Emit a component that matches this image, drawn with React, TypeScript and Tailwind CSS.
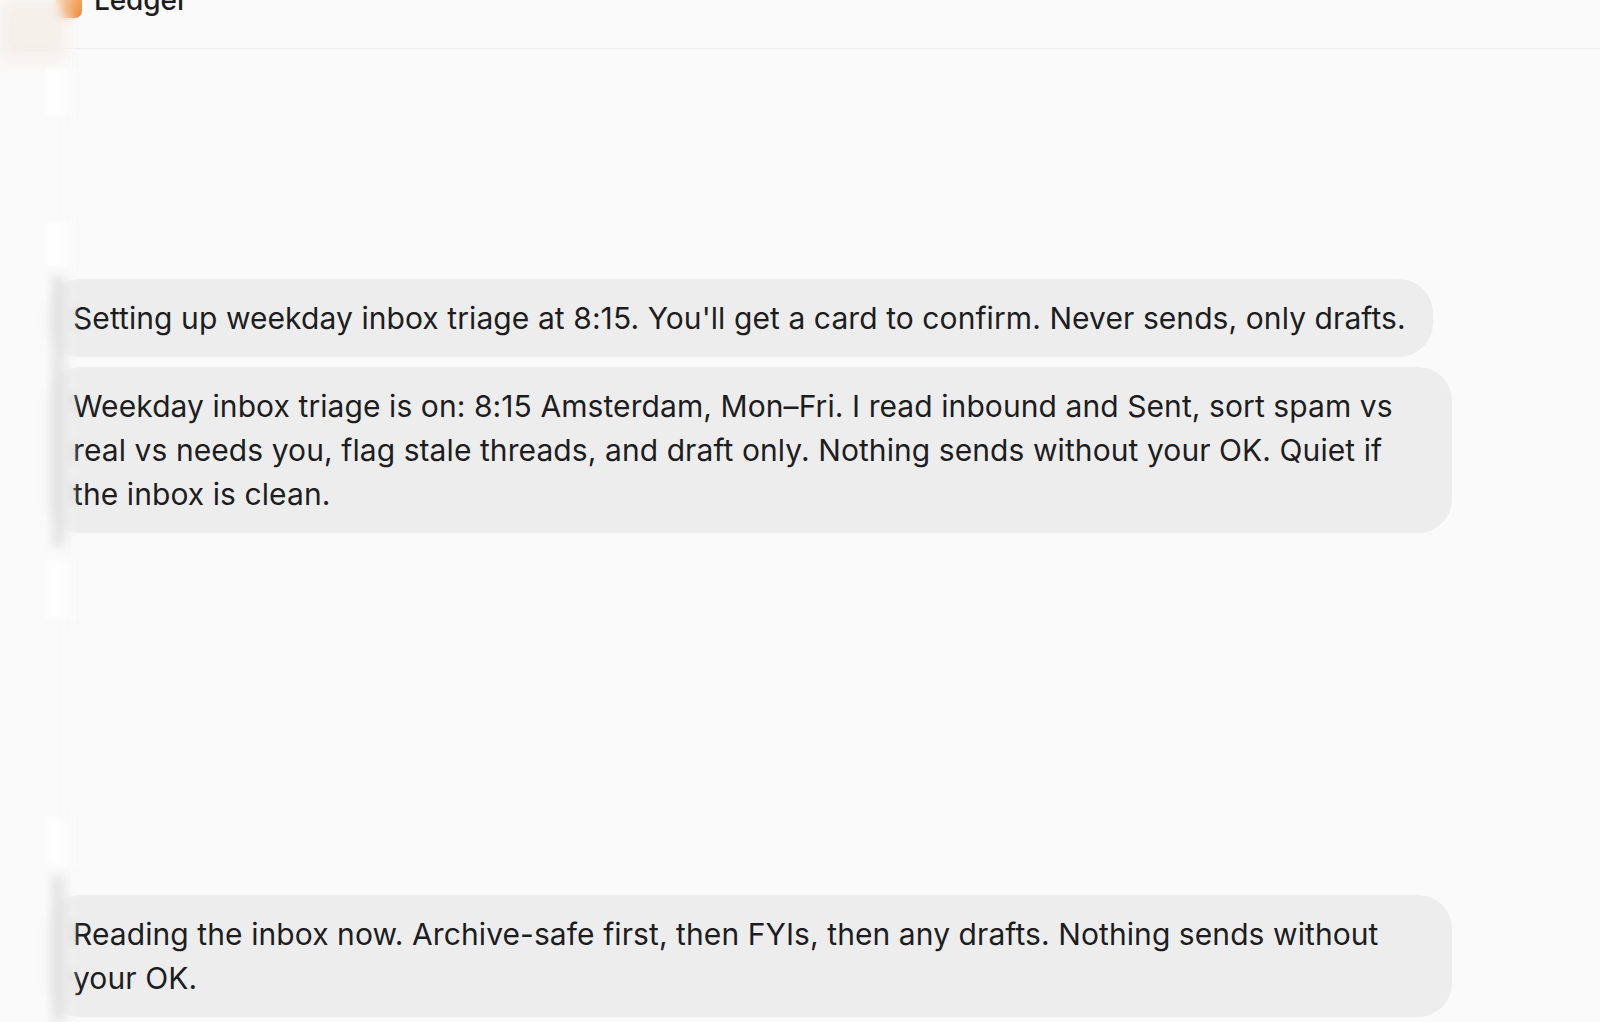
const messages = [
  {
    id: 1,
    text: "Setting up weekday inbox triage at 8:15. You'll get a card to confirm. Never sends, only drafts.",
    gapBefore: 'mt-[230px]',
  },
  {
    id: 2,
    text: 'Weekday inbox triage is on: 8:15 Amsterdam, Mon–Fri. I read inbound and Sent, sort spam vs real vs needs you, flag stale threads, and draft only. Nothing sends without your OK. Quiet if the inbox is clean.',
    gapBefore: 'mt-[10px]',
  },
  {
    id: 3,
    text: 'Reading the inbox now. Archive-safe first, then FYIs, then any drafts. Nothing sends without your OK.',
    gapBefore: 'mt-[362px]',
  },
]

function Bubble({ text, className }: { text: string; className?: string }) {
  return (
    <div
      className={`w-fit max-w-[1406px] rounded-[34px] bg-[#ededed] px-[27px] py-[17px] text-[30px] leading-[44px] tracking-[0.08px] text-[#1d1d1f] ${className ?? ''}`}
    >
      {text}
    </div>
  )
}

export default function App() {
  return (
    <div
      className="relative h-[1022px] w-[1600px] overflow-hidden bg-[#fafafa]"
      style={{ fontFamily: 'Inter, "Noto Sans", sans-serif' }}
    >
      {/* Header */}
      <div className="flex h-[49px] items-start gap-[12px] border-b border-[#ececec] pl-[56px]">
        <div className="mt-[-10px] h-[28px] w-[26px] rounded-[7px] bg-gradient-to-b from-[#f7b267] to-[#f08a3c]" />
        <span className="mt-[-14px] text-[28px] font-medium leading-[28px] tracking-[-0.1px] text-[#1d1d1f]">
          Ledger
        </span>
      </div>

      {/* Thread */}
      <div className="flex flex-col pl-[46px]">
        {messages.map(m => (
          <Bubble key={m.id} text={m.text} className={m.gapBefore} />
        ))}
      </div>

      {/* Frosted sidebar edge, lying over the thread */}
      <div className="pointer-events-none absolute inset-y-0 left-0 flex w-[80px] flex-col bg-[#fafafa]/50 backdrop-blur-[5px] [mask-image:linear-gradient(to_right,black_72%,transparent)]">
        <div className="h-[60px] w-[70px] bg-[#f3ebe4]/70 blur-[8px]" />
        <div className="ml-[46px] mt-[8px] h-[48px] w-[30px] bg-white/80 blur-[2px]" />
        <div className="ml-[46px] mt-[106px] h-[44px] w-[30px] bg-white/80 blur-[2px]" />
        <div className="ml-[52px] mt-[10px] h-[270px] w-[16px] bg-[#d8d8d8]/60 blur-[4px]" />
        <div className="ml-[46px] mt-[14px] h-[60px] w-[30px] bg-white/70 blur-[2px]" />
        <div className="ml-[46px] mt-[198px] h-[48px] w-[30px] bg-white/70 blur-[2px]" />
        <div className="ml-[52px] mt-[10px] h-[146px] w-[16px] bg-[#d8d8d8]/60 blur-[4px]" />
      </div>
    </div>
  )
}
